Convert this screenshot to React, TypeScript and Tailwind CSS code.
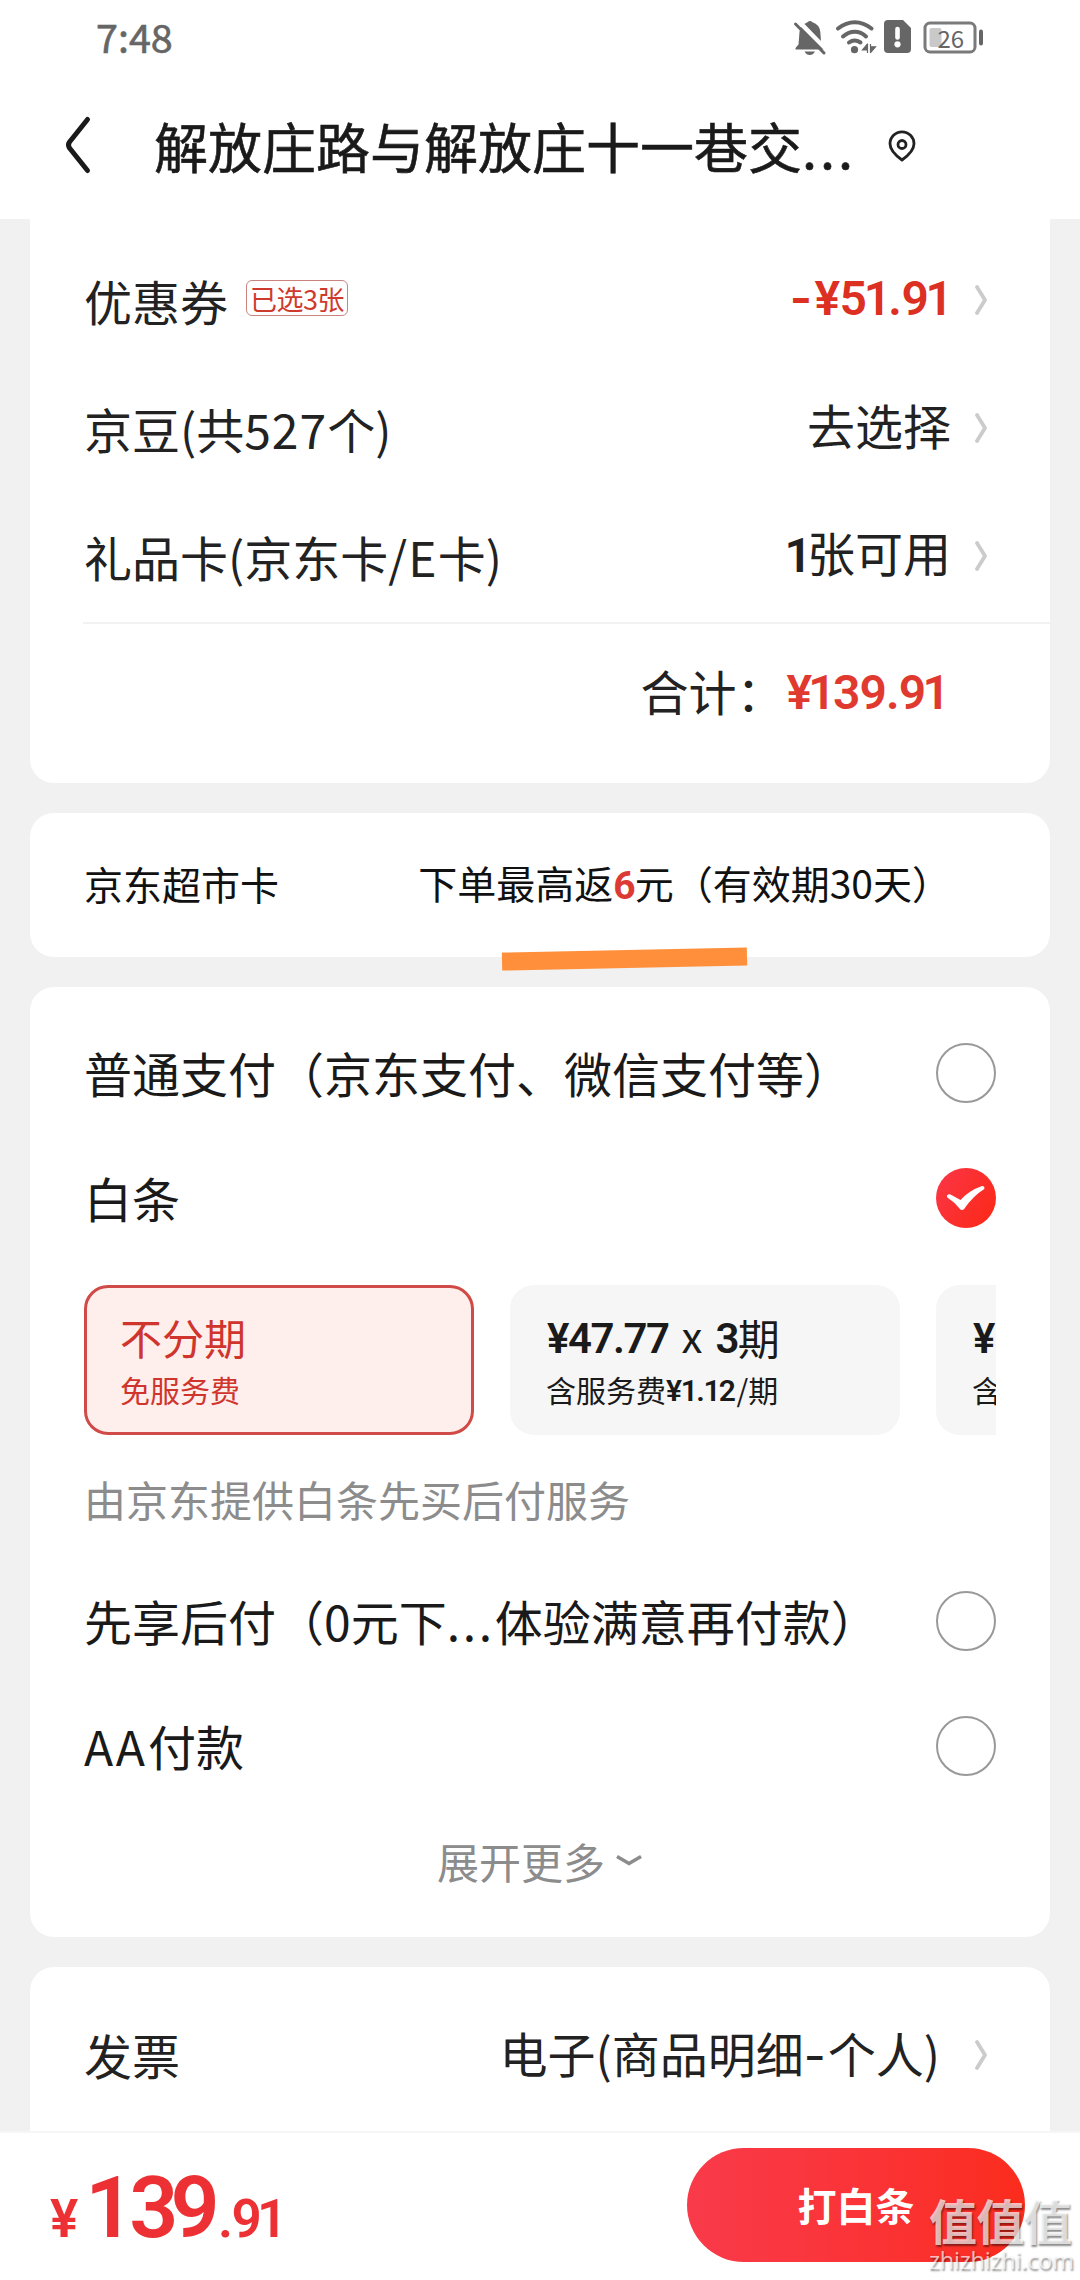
import type { ReactNode } from 'react';
import { useState } from 'react';

const options = [
  { main: '', suffix: '', title: '不分期', fee: '' },
  { main: '¥47.77', suffix: '3', title: '期', fee: '¥1.12' },
  { main: '¥', suffix: '', title: '', fee: '' },
];

function StatusIcons() {
  return (
    <svg className="w-[192px] h-[38px]" viewBox="793 18 192 38" fill="none">
      {/* muted bell */}
      <path d="M801 26 L823.5 48.5 H795.5 V47 L798.5 43.5 L799.5 31 Q799.8 28 801 26Z" fill="#666" />
      <path d="M804.5 23 Q806 21.8 807.5 21.3 Q810 18.5 812.5 21.3 Q819.5 23.5 820.3 31 L821 40Z" fill="#666" />
      <path d="M795.5 23 L824 52" stroke="#666" strokeWidth="3" strokeLinecap="round" />
      <path d="M804.5 50.5 H815 Q813 54 809.8 54 Q806.5 54 804.5 50.5Z" fill="#666" />
      {/* wifi */}
      <g stroke="#666" strokeWidth="4" strokeLinecap="round">
        <path d="M838 27.5 Q846 21.2 854.8 21.2 Q863.5 21.2 871.5 27.5" />
        <path d="M843 35.5 Q848.5 30.8 854.8 30.8 Q861 30.8 866 35.5" />
        <path d="M849 41.5 Q854.5 37.5 860.5 41.5" />
      </g>
      <circle cx="854.5" cy="48.7" r="3.6" fill="#666" />
      <path d="M867.5 42.5 V52 M867.5 42.8 L862.5 49 H867.5 M870.5 43 V52 M870.5 51.5 L875.5 45.8 H870.5" stroke="#666" strokeWidth="1.2" fill="#666" />
      {/* sim alert */}
      <path d="M888 19 H903 L911 27 V48 Q911 52 907 52 H888 Q884 52 884 48 V23 Q884 19 888 19Z" fill="#666" />
      <path d="M897.5 28 V36.5" stroke="#fff" strokeWidth="4.6" strokeLinecap="round" />
      <circle cx="897.5" cy="43.3" r="3.1" fill="#fff" />
      {/* battery */}
      <rect x="925" y="22" width="50" height="29" rx="5" stroke="#7a7a7a" strokeWidth="3" />
      <rect x="929.5" y="27" width="12" height="19" rx="2" fill="#c9c9c9" />
      <rect x="979" y="28.5" width="4" height="16" rx="2" fill="#666" />
      <text x="950.7" y="46.5" textAnchor="middle" fontSize="24" fill="#666" fontFamily="Noto Sans CJK SC, sans-serif">26</text>
    </svg>
  );
}

function Chevron({ className = '' }: { className?: string }) {
  return (
    <svg className={`w-3 h-[30px] mr-[9px] ${className}`} viewBox="0 0 12 30" fill="none" stroke="#cbcbcb" strokeWidth="3.8" strokeLinecap="round" strokeLinejoin="round">
      <path d="M2 2 L10 15 L2 28" />
    </svg>
  );
}

function Amount({ value, className = 'tracking-[-0.02em]' }: { value: string; className?: string }) {
  return (
    <span className={`font-['Roboto'] font-semibold leading-none ${className}`}>
      {value.split(/([1-])/).map((part, i) => {
        if (part === '1') return <span key={i} className="-ml-[0.06em] tracking-[-0.06em]">1</span>;
        if (part === '-') return <span key={i} className="font-['Inter'] tracking-[0.05em]">-</span>;
        return part;
      })}
    </span>
  );
}

function Row({ label, children }: { label: ReactNode; children: ReactNode }) {
  return (
    <div className="flex items-center justify-between h-32 px-[54px]">
      <div className="flex items-center text-[48px] leading-none">{label}</div>
      <div className="flex items-center">{children}</div>
    </div>
  );
}

function PayRow({ label, checked, onClick }: { label: ReactNode; checked: boolean; onClick: () => void }) {
  return (
    <button onClick={onClick} className="w-full h-[125px] px-[54px] flex items-center justify-between text-left">
      <span className="mb-px text-[48px] leading-none whitespace-nowrap">{label}</span>
      {checked ? (
        <svg className="w-[60px] h-[60px]" viewBox="0 0 60 60">
          <defs>
            <linearGradient id="tick" x1="0" y1="0" x2="1" y2="0.6">
              <stop offset="0" stopColor="#fb3648" />
              <stop offset="1" stopColor="#fb2a1c" />
            </linearGradient>
          </defs>
          <circle cx="30" cy="30" r="30" fill="url(#tick)" />
          <path d="M11 27.5 Q12.5 25.5 14.5 26.5 L24.5 32 Q33 22.5 46 18 Q49 18 48.3 21 Q37 28 28.5 40.5 Q26 43.5 23.5 40.5 Q19 34.5 12 30 Q10.5 29 11 27.5Z" fill="#fff" />
        </svg>
      ) : (
        <span className="w-[60px] h-[60px] rounded-full border-2 border-[#999]" />
      )}
    </button>
  );
}

export default function App() {
  const [pay, setPay] = useState(1);
  const [plan, setPlan] = useState(0);

  return (
    <div className="relative w-[1080px] h-[2280px] overflow-hidden flex flex-col bg-[#f1f1f1] text-[#222] font-['Noto_Sans_CJK_SC',sans-serif]">
      <header className="h-[219px] shrink-0 bg-white">
        <div className="h-[76px] flex items-center justify-between pl-[96px] pr-[95px]">
          <span className="mb-1 text-[39.5px] leading-none text-[#666] [-webkit-text-stroke:0.6px]">7:48</span>
          <StatusIcons />
        </div>
        <div className="h-[138px] flex items-center pl-[64px]">
          <svg className="w-7 h-[60px]" viewBox="0 0 28 60" fill="none" stroke="#1a1a1a" strokeWidth="5" strokeLinecap="round" strokeLinejoin="round">
            <path d="M23.5 4.5 L5.5 27 Q3.5 30 5.5 33 L23.5 55.5" />
          </svg>
          <h1 className="ml-[62px] mt-0.5 text-[54px] leading-none text-[#1a1a1a] whitespace-nowrap [-webkit-text-stroke:0.6px]">
            解放庄路与解放庄十一巷交<span className="tracking-[3px]">...</span>
          </h1>
          <svg className="ml-[32px] mt-0.5 w-7 h-8" viewBox="0 0 28 32" fill="none" stroke="#222" strokeWidth="2.8">
            <path d="M14 30 Q2 21.5 2 13.8 A12 12 0 0 1 26 13.8 Q26 21.5 14 30Z" strokeLinejoin="round" />
            <circle cx="14" cy="14.5" r="4" />
          </svg>
        </div>
      </header>

      <main className="flex-1 min-h-0 overflow-hidden px-[30px] flex flex-col gap-[30px]">
        <section className="shrink-0 h-[564px] bg-white rounded-b-3xl pt-[17px]">
          <Row
            label={
              <>
                优惠券
                <span className="ml-[18px] -mt-1 h-9 w-[102px] flex items-center justify-center rounded-md border border-[#c98480] text-[27px] text-[#cf3a2e] tracking-[-0.5px]">已选3张</span>
              </>
            }
          >
            <Amount value="-¥51.91" className="mr-[25px] mb-1 text-[48px] tracking-[-0.01em] text-[#dc3022]" />
            <Chevron />
          </Row>
          <Row label={<>京豆(共<span className="tracking-[1px]">527</span>个)</>}>
            <span className="mr-[24px] mb-2 text-[48px] leading-none">去选择</span>
            <Chevron />
          </Row>
          <Row label={<>礼品卡(京东卡<span className="tracking-[1.2px]">/E</span>卡)</>}>
            <span className="mr-[24px] mb-1.5 text-[48px] leading-none"><Amount value="1" className="-mr-0.5" />张可用</span>
            <Chevron />
          </Row>
          <div className="mt-0.5 ml-[53px] h-0.5 bg-[#f2f2f2]" />
          <div className="h-[131px] flex items-center justify-end pr-[103px]">
            <span className="mr-[2px] text-[48px] leading-none">合计：</span>
            <Amount value="¥139.91" className="mt-1.5 text-[48px] tracking-[-0.018em] text-[#e03a30]" />
          </div>
        </section>

        <section className="shrink-0 h-[144px] bg-white rounded-3xl flex items-center justify-between pl-[54px] pr-[99px] pb-[3px] text-[39px] leading-none text-[#111]">
          <span>京东超市卡</span>
          <span className="mt-0.5">下单最高返<b className="font-['Roboto'] tracking-[-1px] text-[#dc3a34]">6</b>元（有效期30天）</span>
        </section>

        <section className="shrink-0 h-[950px] bg-white rounded-3xl pt-[23px] text-[#1a1a1a]">
          <PayRow label="普通支付（京东支付、微信支付等）" checked={pay === 0} onClick={() => setPay(0)} />
          <PayRow label="白条" checked={pay === 1} onClick={() => setPay(1)} />
          <div className="mt-[25px] mx-[54px] flex gap-9 overflow-hidden">
            {options.map((o, i) => (
              <button
                key={i}
                onClick={() => setPlan(i)}
                className={`shrink-0 h-[150px] border-3 pl-[33px] pt-[25px] flex flex-col items-start whitespace-nowrap ${i === 2 ? 'w-[60px] rounded-l-3xl' : 'w-[390px] rounded-3xl'} ${plan === i ? 'border-[#d04a48] bg-[#feeeec] text-[#cf352d]' : 'border-[#f6f6f6] bg-[#f6f6f6]'}`}
              >
                <span className="h-12 flex items-center text-[42px] leading-none">
                  {o.main && <Amount value={o.main} className="ml-px mt-1 tracking-[-0.035em]" />}
                  {o.suffix && (
                    <>
                      <span className="mx-[13px] -mt-1">x</span>
                      <Amount value={o.suffix} className="mt-1 tracking-[-0.04em]" />
                    </>
                  )}
                  {o.title}
                </span>
                <span className="mt-[10px] h-9 flex items-center text-[30px] leading-none">
                  {i === 0 && '免服务费'}
                  {i === 1 && <>含服务费<Amount value={o.fee} className="mt-1 tracking-[0.02em]" />/期</>}
                  {i === 2 && '含'}
                </span>
              </button>
            ))}
          </div>
          <div className="h-[123px] pt-1 px-[54px] flex items-center text-[42px] leading-none text-[#8c8c8c]">由京东提供白条先买后付服务</div>
          <PayRow label={<>先享后付（0元下<span className="tracking-[2.7px]">...</span>体验满意再付款）</>} checked={pay === 2} onClick={() => setPay(2)} />
          <PayRow label={<><span className="tracking-[3px]">AA</span>付款</>} checked={pay === 3} onClick={() => setPay(3)} />
          <div className="h-[106px] flex items-center justify-center text-[42px] leading-none text-[#8c8c8c]">
            展开更多
            <svg className="ml-[10px] w-7 h-3.5" viewBox="0 0 28 14" fill="none" stroke="#8c8c8c" strokeWidth="3.5">
              <path d="M2 2.5 L14 9.5 L26 2.5" />
            </svg>
          </div>
        </section>

        <section className="shrink-0 h-[300px] bg-white rounded-3xl pt-[23px]">
          <Row label="发票">
            <span className="mr-[35px] text-[48px] leading-none">电子(商品明细<span className="font-['Inter'] tracking-[2px]">-</span>个人)</span>
            <Chevron className="mt-0.5" />
          </Row>
        </section>
      </main>

      <footer className="h-[149px] shrink-0 bg-white border-t-2 border-[#f6f6f6] flex items-center justify-between pl-[50px] pr-[55px]">
        <div className="mt-0.5 flex items-baseline text-[#ec3033]">
          <Amount value="¥" className="text-[53px]" />
          <Amount value="139" className="ml-3 text-[86px] tracking-[-0.09em]" />
          <Amount value=".91" className="ml-1.5 text-[53px] tracking-[-0.03em]" />
        </div>
        <button className="mb-1 w-[338px] h-[114px] rounded-full bg-linear-to-r from-[#f93a4a] to-[#fb2c1c] text-white text-[39px] leading-none font-bold">打白条</button>
      </footer>

      {/* marker stroke under the cashback text */}
      <div className="absolute left-[502px] top-[950px] w-[245px] h-[18px] bg-[#ff8f3b] -rotate-[1.2deg]" />

      <div className="absolute left-[929px] top-[2195px] text-white/70 leading-none [text-shadow:1px_2px_2px_rgb(0_0_0/0.45)]">
        <div className="text-[48px] font-bold tracking-[-0.5px]">值值值</div>
        <div className="mt-1.5 font-['Open_Sans'] text-[23.5px] tracking-[-0.2px]">zhizhizhi.com</div>
      </div>
    </div>
  );
}
